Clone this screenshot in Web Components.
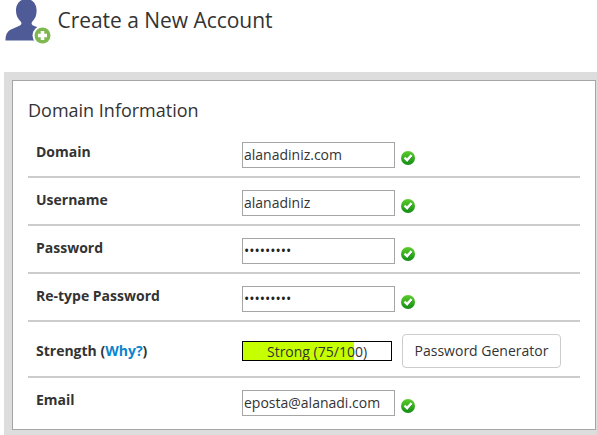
<!DOCTYPE html>
<html lang="en">
<head>
<meta charset="utf-8">
<title>Create a New Account</title>
<style>
    body {
        margin: 0;
        background-color: #fff;
        color: #333;
        font-family: "Open Sans", "Noto Sans", sans-serif;
        font-size: 14px;
        line-height: 20px;
        overflow: hidden;
    }
</style>
</head>
<body>
<page-header>Create a New Account</page-header>
<form-panel heading="Domain Information">
    <form-row label="Domain"><text-field>alanadiniz.com</text-field><valid-icon></valid-icon></form-row>
    <form-row label="Username"><text-field>alanadiniz</text-field><valid-icon></valid-icon></form-row>
    <form-row label="Password"><text-field masked>•••••••••</text-field><valid-icon></valid-icon></form-row>
    <form-row label="Re-type Password"><text-field masked>•••••••••</text-field><valid-icon></valid-icon></form-row>
    <form-row label="Strength" help="Why?" tall><strength-meter value="75">Strong (75/100)</strength-meter><push-button>Password Generator</push-button></form-row>
    <form-row label="Email" last><text-field>eposta@alanadi.com</text-field><valid-icon></valid-icon></form-row>
</form-panel>
<script>
(function () {

    function define(name, html, connected) {
        let tmpl = document.createElement('template');
        tmpl.innerHTML = html;
        customElements.define(name, class extends HTMLElement {
            constructor() {
                super();
                this.attachShadow({ mode: 'open' }).appendChild(tmpl.content.cloneNode(true));
            }

            connectedCallback() {
                if (connected) {
                    connected(this, this.shadowRoot);
                }
            }
        });
    }

    define('page-header', `
    <style>
        :host { display: flex; height: 72px; padding-left: 5px; box-sizing: border-box; }
        svg { display: block; flex: none; width: 46px; height: 45px; }
        h1 { margin: 5px 0 0 6.5px; font-size: 21px; line-height: 30px; font-weight: 400; letter-spacing: -.04px; white-space: nowrap; }
    </style>
    <svg viewBox="0 0 46 45">
        <path fill="#4f5b97" d="M.5 40.500C.5 35 2 31.500 6 29.500L15 25.500C16.500 24.500 16.800 23.500 16 22C12.500 18.500 11 15 11 10.500C11 4 15 -1 21.300 -1S31.600 4 31.600 10.500C31.600 15 30.500 18.500 27 22C26.200 23.500 26.500 24.500 28 25.500L36 28.500L40 40.500Z"/>
        <circle cx="37.500" cy="35.500" r="10" fill="#fff"/>
        <circle cx="37.500" cy="35.500" r="8" fill="#7fb850"/>
        <path fill="#fff" d="M35.700 31h3.600v2.700H42v3.600h-2.700V40h-3.600v-2.700H33v-3.600h2.700z"/>
    </svg>
    <h1><slot></slot></h1>`);

    define('form-panel', `
    <style>
        :host { display: block; box-sizing: border-box; height: 363px; margin-left: 4px; padding: 8px 1px 5px 8px; background-color: #ddd; }
        section { box-sizing: border-box; height: 350px; padding: 14px 15px 0; border: 1px solid #a5a5a5; background-color: #fff; }
        h2 { margin: 0; height: 35px; font-size: 18px; line-height: 30px; font-weight: 400; }
    </style>
    <section><h2></h2><slot></slot></section>`, function (host, root) {
        root.querySelector('h2').textContent = host.getAttribute('heading');
    });

    define('form-row', `
    <style>
        :host { display: grid; grid-template-columns: 206px 1fr; box-sizing: border-box; height: 48px; padding-left: 8px; border-bottom: 2px solid #ccc; }
        :host([tall]) { height: 56px; }
        :host([last]) { border-bottom: 0; }
        .label { padding-top: 12px; font-weight: 700; }
        :host([tall]) .label { padding-top: 19px; }
        .controls { display: flex; align-items: flex-start; padding-top: 12px; }
        :host([tall]) .controls { gap: 10px; }
        a { color: #0d84ce; text-decoration: none; }
    </style>
    <div class="label"></div>
    <div class="controls"><slot></slot></div>`, function (host, root) {
        let label = root.querySelector('.label');
        label.textContent = host.getAttribute('label');
        if (host.hasAttribute('help')) {
            let link = document.createElement('a');
            link.href = '#';
            link.textContent = host.getAttribute('help');
            label.append(' (', link, ')');
        }
    });

    define('text-field', `
    <style>
        :host { display: block; box-sizing: border-box; width: 153px; height: 26px; padding: 2px 1px; border: 1px solid #a5a5a5; line-height: 20px; white-space: nowrap; overflow: hidden; }
        :host([masked]) { color: #222; }
    </style>
    <slot></slot>`);

    define('valid-icon', `
    <style>
        :host { display: block; margin: 9px 0 0 6px; }
        svg { display: block; width: 14px; height: 14px; }
    </style>
    <svg viewBox="0 0 14 14">
        <defs>
            <linearGradient id="g" x1="0" y1="0" x2="0" y2="1">
                <stop offset="0" stop-color="#5cca2d"/>
                <stop offset=".5" stop-color="#35b01e"/>
                <stop offset="1" stop-color="#138a18"/>
            </linearGradient>
        </defs>
        <circle cx="7" cy="7" r="7" fill="url(#g)"/>
        <path d="M3.800 7.500L6.400 10.100L10.900 5.100" fill="none" stroke="#167b13" stroke-width="2.200"/>
        <path d="M3.500 6.600L6.100 9.100L10.600 4.200" fill="none" stroke="#fff" stroke-width="2.500"/>
    </svg>`);

    define('strength-meter', `
    <style>
        :host { display: block; box-sizing: border-box; width: 150px; height: 20px; margin-top: 7px; border: 1px solid #000; line-height: 20px; text-align: center; overflow: hidden; }
    </style>
    <slot></slot>`, function (host) {
        let value = host.getAttribute('value');
        host.style.background = `linear-gradient(to right, #c6ff00 ${value}%, #fff ${value}%)`;
    });

    define('push-button', `
    <style>
        :host { display: block; box-sizing: border-box; width: 159px; height: 34px; padding: 6px 0; border: 1px solid #ccc; border-radius: 4px; line-height: 20px; text-align: center; white-space: nowrap; }
    </style>
    <slot></slot>`);

})();
</script>
</body>
</html>
